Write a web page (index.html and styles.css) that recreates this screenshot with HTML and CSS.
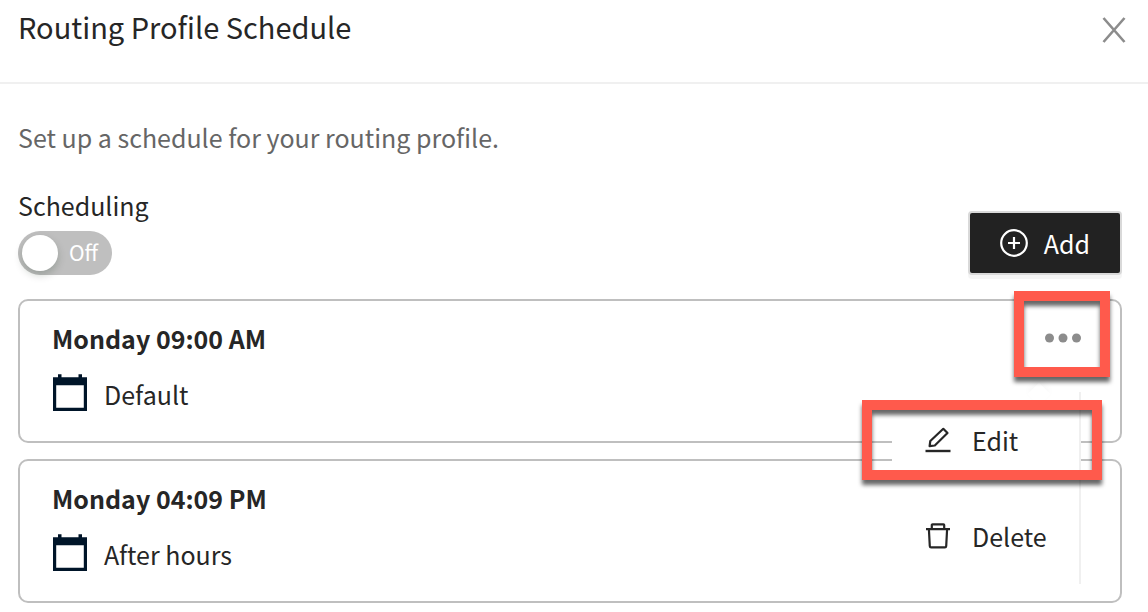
FILE: index.html
```html
<!DOCTYPE html>
<html lang="en">
<head>
    <meta charset="UTF-8">
    <meta name="viewport" content="width=device-width, initial-scale=1.0">
    <title>Routing Profile Schedule</title>
    <link rel="stylesheet" href="styles.css">
</head>
<body>
<header class="header">
    <h1>Routing Profile Schedule</h1>
    <button type="button" class="close" aria-label="Close">
        <svg width="24" height="26" viewBox="0 0 24 26" fill="none" stroke="#8c8c8c" stroke-width="2.6">
            <path d="M1.5 1 22.500 25M22.500 1 1.500 25"/>
        </svg>
    </button>
</header>

<main class="content">
    <p class="intro">Set up a schedule for your routing profile.</p>

    <div class="toolbar">
        <div class="scheduling">
            <label for="scheduling">Scheduling</label>
            <div class="switch">
                <input type="checkbox" role="switch" id="scheduling" name="scheduling">
                <span class="switch-text">Off</span>
            </div>
        </div>
        <button type="button" class="add">
            <svg width="28" height="28" viewBox="0 0 28 28" fill="none" stroke="#fff" stroke-width="2.2">
                <circle cx="14" cy="14" r="12.8"/>
                <path d="M14 8v12M8 14h12"/>
            </svg>
            Add
        </button>
    </div>

    <section class="card">
        <div class="details">
            <h2>Monday 09:00 AM</h2>
            <div class="profile">
                <svg class="calendar" width="36" height="40" viewBox="0 0 36 40">
                    <path fill="#001529" fill-rule="evenodd" d="M1 3.300h5V.200h3.500v3.100h17V.200H30v3.100h5v33.700H1zM4.200 11.300v22.400h27.600V11.300z"/>
                </svg>
                <span>Default</span>
            </div>
        </div>
        <div class="actions">
            <button type="button" class="more" aria-label="More" aria-haspopup="menu">
                <svg width="36" height="10" viewBox="0 0 36 10" fill="#8c8c8c">
                    <circle cx="4.500" cy="5" r="4.500"/>
                    <circle cx="18" cy="5" r="4.500"/>
                    <circle cx="31.500" cy="5" r="4.500"/>
                </svg>
            </button>
            <div class="menu" role="menu">
                <button type="button" class="menu-item marked" role="menuitem">
                    <svg width="26" height="26" viewBox="0 0 26 26" fill="none" stroke="#262626" stroke-width="2.2" stroke-linejoin="round">
                        <path d="M5.300 14 18.300 1.800 22.500 6 9.800 18.500 4.600 19.200z"/>
                        <path d="M.500 24h25" stroke-width="2.400"/>
                    </svg>
                    Edit
                </button>
                <button type="button" class="menu-item" role="menuitem">
                    <svg width="26" height="26" viewBox="0 0 26 26" fill="none" stroke="#262626" stroke-width="2.2" stroke-linejoin="round">
                        <path d="M1 6.200h24M6.800 6V2q0-.700.700-.700h11q.700 0 .700.700v4M3.900 6.200l.900 17q.100 1.200 1.300 1.200h13.800q1.200 0 1.300-1.200l.900-17"/>
                    </svg>
                    Delete
                </button>
            </div>
        </div>
    </section>

    <section class="card">
        <div class="details">
            <h2>Monday 04:09 PM</h2>
            <div class="profile">
                <svg class="calendar" width="36" height="40" viewBox="0 0 36 40">
                    <path fill="#001529" fill-rule="evenodd" d="M1 3.300h5V.200h3.500v3.100h17V.200H30v3.100h5v33.700H1zM4.200 11.300v22.400h27.600V11.300z"/>
                </svg>
                <span>After hours</span>
            </div>
        </div>
    </section>
</main>
</body>
</html>
```
FILE: styles.css
```css
* {
    box-sizing: border-box;
}

body {
    font-family: "Noto Sans CJK SC", "Noto Sans", sans-serif;
    font-size: 25px;
    line-height: 36px;
    margin: 0;
    color: #262626;
    background-color: #fff;
}

h1,
h2,
p {
    margin: 0;
}

button {
    font: inherit;
    color: inherit;
    background: none;
    border: none;
    padding: 0;
    cursor: pointer;
}

svg {
    display: block;
}

.header {
    display: flex;
    justify-content: space-between;
    align-items: flex-start;
    padding: 8px 22px 30px 18px;
    border-bottom: 2px solid #f0f0f0;
}

.header h1 {
    font-size: 29px;
    line-height: 36px;
    font-weight: 400;
}

.close {
    height: 44px;
}

.content {
    padding: 35px 26px 10px 18px;
}

.intro {
    color: #666;
}

.toolbar {
    display: flex;
    justify-content: space-between;
    align-items: flex-end;
    margin-top: 32px;
}

.scheduling label {
    display: block;
}

.switch {
    display: grid;
    width: 94px;
    height: 44px;
    margin-top: 8px;
}

.switch input {
    grid-area: 1 / 1;
    appearance: none;
    margin: 0;
    padding: 4px;
    border-radius: 22px;
    background-color: #bfbfbf;
    cursor: pointer;
}

.switch input::before {
    content: "";
    display: block;
    width: 36px;
    height: 36px;
    border-radius: 50%;
    background-color: #fff;
    box-shadow: 0 4px 8px rgba(0, 35, 11, 0.2);
}

.switch-text {
    grid-area: 1 / 1;
    justify-self: end;
    align-self: center;
    padding: 0 14px 2px 0;
    font-size: 21px;
    line-height: 32px;
    color: #fff;
    pointer-events: none;
}

.add {
    display: flex;
    align-items: center;
    gap: 16px;
    height: 64px;
    padding: 0 30px;
    color: #fff;
    background-color: #222;
    border: 2px solid #d9d9d9;
    border-radius: 4px;
    box-shadow: 0 4px 0 rgba(0, 0, 0, 0.04);
}

.card {
    display: flex;
    justify-content: space-between;
    margin-top: 16px;
    padding: 20px 39px 26px 32px;
    border: 2px solid #bfbfbf;
    border-radius: 10px;
}

.toolbar + .card {
    margin-top: 24px;
}

.card h2 {
    font-size: 25px;
    line-height: 34px;
    font-weight: 700;
}

.profile {
    display: flex;
    align-items: center;
    gap: 16px;
    margin-top: 19px;
    padding-bottom: 1px;
    line-height: 40px;
}

.actions {
    position: relative;
    height: 34px;
}

.more {
    position: relative;
    display: flex;
    align-items: center;
    height: 34px;
}

/* callout frames around the menu button and the edit item */
.more::after,
.marked::after {
    content: "";
    position: absolute;
    z-index: 2;
    border: 10px solid #ff5a4c;
    filter: drop-shadow(0 5px 2px rgba(0, 0, 0, 0.6));
    pointer-events: none;
}

.more::after {
    inset: -30px -29px -22px -31px;
}

.marked::after {
    inset: 8px -23px 8px -30px;
}

.menu {
    position: absolute;
    z-index: 1;
    top: 71px;
    right: 0;
    width: 189px;
    background-color: #fff;
    border-right: 2px solid #f0f0f0;
}

.menu::before {
    content: "";
    position: absolute;
    top: -6px;
    right: 32px;
    width: 16px;
    height: 16px;
    background-color: #fff;
    box-shadow: -2px -2px 6px rgba(0, 0, 0, 0.03);
    transform: rotate(45deg);
}

.menu-item {
    position: relative;
    display: flex;
    align-items: center;
    gap: 21px;
    width: 100%;
    height: 96px;
    padding: 0 0 1px 33px;
}
```
